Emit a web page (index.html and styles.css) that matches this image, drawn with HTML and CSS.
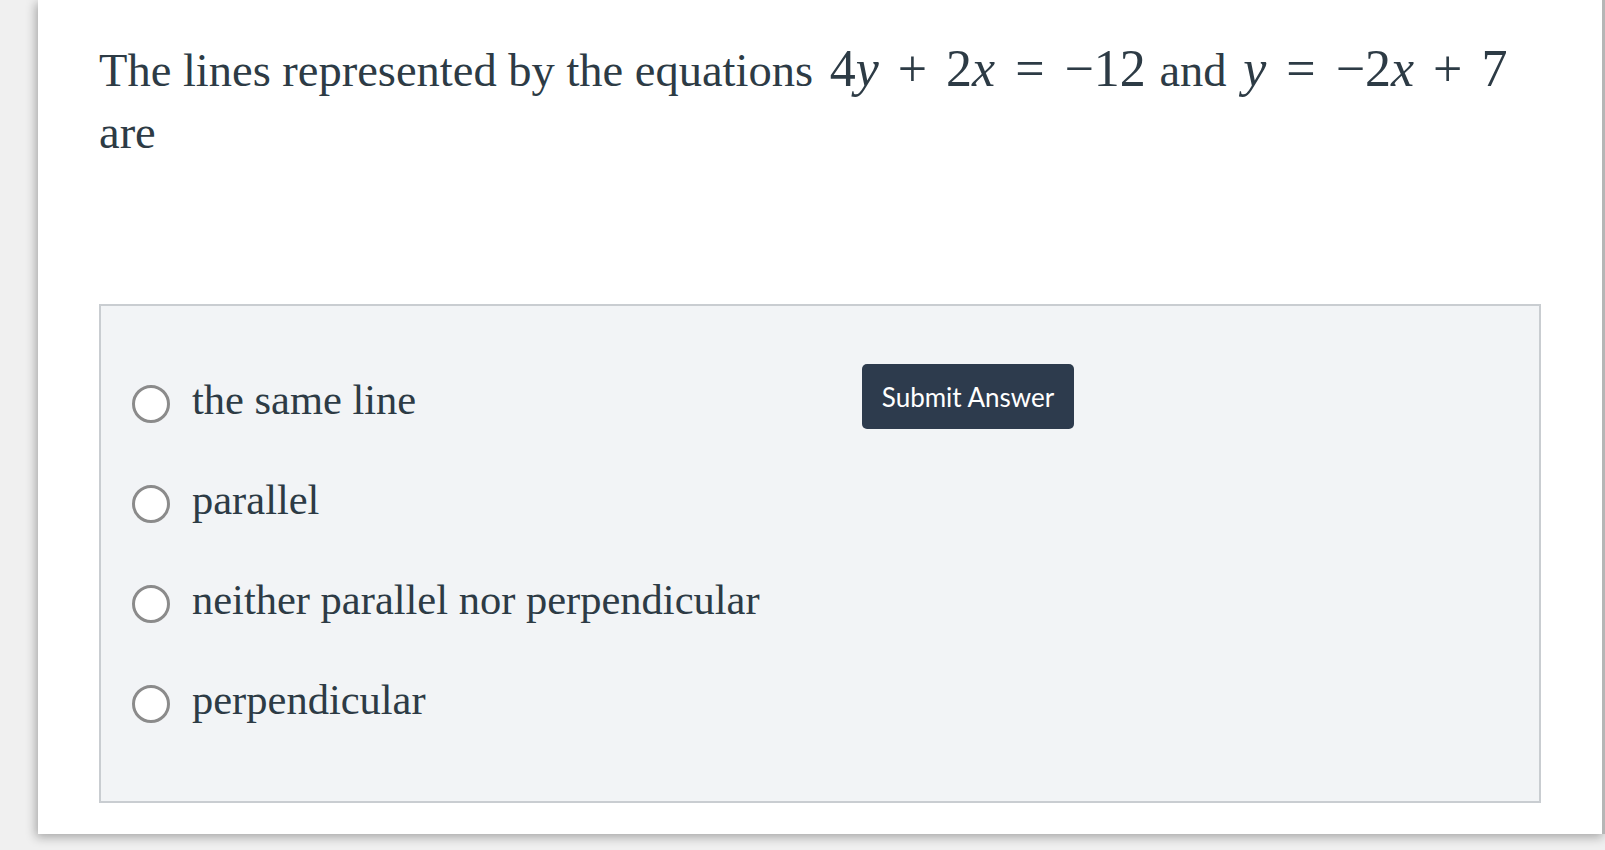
FILE: index.html
```html
<!DOCTYPE html>
<html lang="en">
<head>
<meta charset="utf-8">
<title>Question</title>
<link rel="stylesheet" href="styles.css">
</head>
<body>
<div class="card">
  <p class="question">The lines represented by the equations <span class="math"><span class="n">4</span><span class="v">y</span><span class="bin">+</span><span class="n">2</span><span class="v">x</span><span class="rel">=</span><span class="n">−12</span></span> and <span class="math"><span class="v">y</span><span class="rel">=</span><span class="n">−2</span><span class="v">x</span><span class="bin">+</span><span class="n">7</span></span> are</p>
  <div class="answers">
    <ul class="options">
      <li class="option"><span class="radio"></span><span class="label">the same line</span></li>
      <li class="option"><span class="radio"></span><span class="label">parallel</span></li>
      <li class="option"><span class="radio"></span><span class="label">neither parallel nor perpendicular</span></li>
      <li class="option"><span class="radio"></span><span class="label">perpendicular</span></li>
    </ul>
    <div class="actions">
      <button class="submit" type="button">Submit Answer</button>
    </div>
  </div>
</div>
</body>
</html>
```
FILE: styles.css
```css
html, body {
  margin: 0;
  padding: 0;
  background: #f0f0f0;
  height: 850px;
  overflow: hidden;
}

.card {
  box-sizing: border-box;
  margin-left: 38px;
  width: 1567px;
  height: 834px;
  background: #ffffff;
  border-right: 3px solid #b6b6b6;
  box-shadow: -2px 3px 10px rgba(0, 0, 0, 0.32);
  padding: 40px 0 0 61px;
  color: #2d3b45;
}

.question {
  margin: 0;
  width: 1420px;
  font-family: "Liberation Serif", "Times New Roman", serif;
  font-size: 46.5px;
  line-height: 62px;
}

.math {
  font-family: "Liberation Serif", "Times New Roman", serif;
  font-size: 52px;
  line-height: 1;
  margin: 0 2px 0 5px;
}

.math .v {
  font-style: italic;
}

.math .bin {
  margin: 0 19px;
}

.math .rel {
  margin: 0 20px;
}

.answers {
  box-sizing: border-box;
  margin-top: 140px;
  width: 1442px;
  height: 499px;
  border: 2px solid #c9cdd1;
  background: #f2f4f6;
  padding: 48px 0 0 31px;
  display: grid;
  grid-template-columns: 730px auto;
  align-items: start;
}

.options {
  list-style: none;
  margin: 0;
  padding: 0;
}

.option {
  height: 100px;
  display: flex;
  align-items: center;
  gap: 22px;
}

.radio {
  box-sizing: border-box;
  width: 38px;
  height: 38px;
  border: 3px solid #8b8b8b;
  border-radius: 50%;
  background: #ffffff;
  flex: none;
}

.label {
  font-family: "Liberation Serif", "Times New Roman", serif;
  font-size: 42.5px;
  line-height: 44px;
  padding-bottom: 8px;
}

.actions {
  padding-top: 10px;
}

.submit {
  box-sizing: border-box;
  width: 212px;
  height: 65px;
  border: none;
  border-radius: 5px;
  background: #2d3b4d;
  color: #ffffff;
  font-family: Lato, "Open Sans", sans-serif;
  font-size: 26px;
  padding: 0;
}
```
